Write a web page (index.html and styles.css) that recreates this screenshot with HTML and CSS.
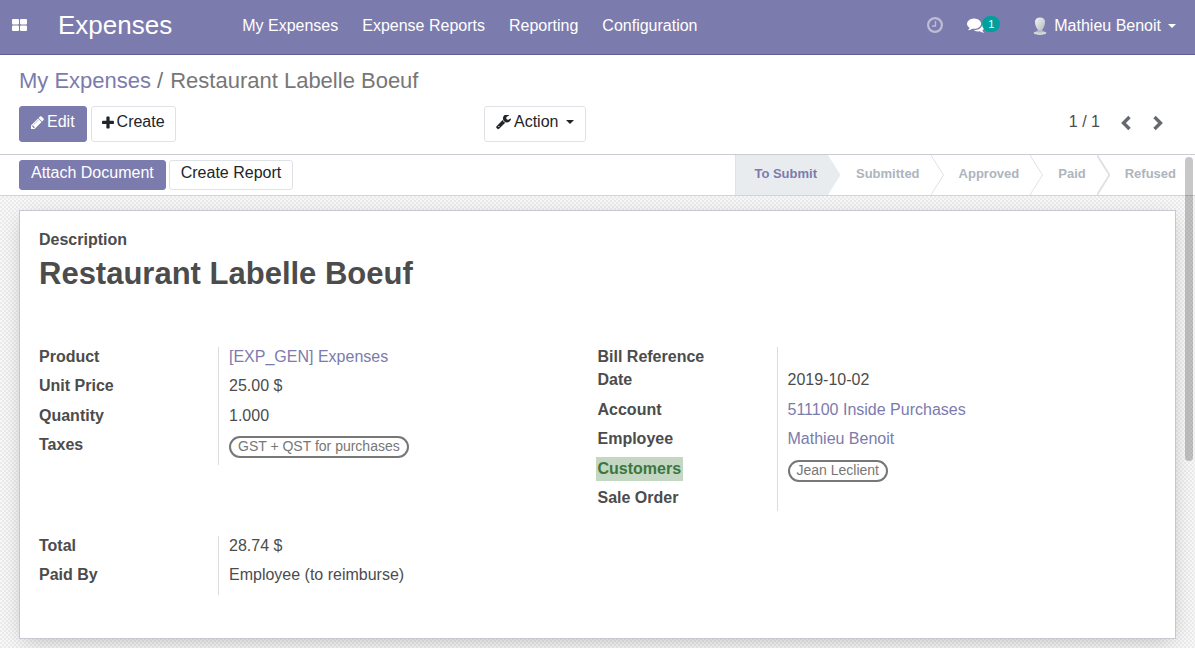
FILE: index.html
```html
<!DOCTYPE html>
<html lang="en">
<head>
<meta charset="utf-8">
<meta name="viewport" content="width=device-width, initial-scale=1">
<title>Restaurant Labelle Boeuf - Expenses</title>
<link rel="stylesheet" href="styles.css">
</head>
<body>
<header class="navbar">
  <button class="apps" aria-label="Applications">
    <svg width="15" height="12" viewBox="0 0 15 12" fill="currentColor"><rect width="7" height="5.5" rx="1"/><rect x="8" width="7" height="5.5" rx="1"/><rect y="6.5" width="7" height="5.5" rx="1"/><rect x="8" y="6.5" width="7" height="5.5" rx="1"/></svg>
  </button>
  <a class="brand" href="#">Expenses</a>
  <nav class="menu">
    <a href="#">My Expenses</a>
    <a href="#">Expense Reports</a>
    <a href="#">Reporting</a>
    <a href="#">Configuration</a>
  </nav>
  <div class="systray">
    <button class="activities" aria-label="Activities">
      <svg width="16" height="16" viewBox="0 0 16 16" fill="none" stroke="currentColor"><circle cx="8" cy="8" r="6.9" stroke-width="2.2"/><path d="M8.5 4v5H5" stroke-width="1.4"/></svg>
    </button>
    <button class="messages" aria-label="Messages">
      <svg width="18" height="18" viewBox="0 0 1792 1792" fill="currentColor"><g transform="translate(0 1536) scale(1 -1)"><path d="M1408 768q0 -139 -94 -257t-256.500 -186.500t-353.500 -68.500q-86 0 -176 16q-124 -88 -278 -128q-36 -9 -86 -16h-3q-11 0 -20.500 8t-11.500 21q-1 3 -1 6.500t0.500 6.500t2 6l2.500 5t3.500 5.500t4 5t4.500 5t4 4.500q5 6 23 25t26 29.500t22.500 29t25 38.500t20.500 44q-124 72 -195 177t-71 224q0 139 94 257t256.500 186.500t353.500 68.500t353.500 -68.500t256.500 -186.500t94 -257zM1792 512q0 -120 -71 -224.500t-195 -176.500q10 -24 20.500 -44t25 -38.500t22.500 -29t26 -29.500t23 -25q1 -1 4 -4.500t4.500 -5t4 -5t3.500 -5.500l2.500 -5t2 -6t0.500 -6.500t-1 -6.500q-3 -14 -13 -22t-22 -7q-50 7 -86 16q-154 40 -278 128q-90 -16 -176 -16q-271 0 -472 132q58 -4 88 -4q161 0 309 45t264 129q125 92 192 212t67 254q0 77 -23 152q129 -71 204 -178t75 -230z"/></g></svg>
      <span class="badge">1</span>
    </button>
    <button class="user">
      <svg width="14" height="18" viewBox="0 0 14 18"><defs><linearGradient id="face" x1="0" y1="0" x2="1" y2="1"><stop offset="0" stop-color="#f4f5f6"/><stop offset="1" stop-color="#b4babe"/></linearGradient></defs><ellipse cx="7" cy="16" rx="6.400" ry="1.900" fill="#d3d7da"/><path d="M4.500 11h5v4.500h-5z" fill="#b4babf"/><path d="M7 0.500c3.400 0 5 1.500 5 4.500S10.300 13.200 7 13.200 2 8 2 5 3.600 .5 7 .5z" fill="url(#face)"/></svg>
      <span>Mathieu Benoit</span>
      <span class="caret"></span>
    </button>
  </div>
</header>

<section class="control-panel">
  <ol class="breadcrumb">
    <li><a href="#">My Expenses</a></li>
    <li>Restaurant Labelle Boeuf</li>
  </ol>
  <div class="toolbar">
    <div class="buttons">
      <button class="btn btn-primary">
        <svg width="13" height="13" viewBox="0 0 1536 1536" fill="currentColor"><g transform="translate(0 1408) scale(1 -1)"><path d="M363 0l91 91l-235 235l-91 -91v-107h128v-128h107zM886 928q0 22 -22 22q-10 0 -17 -7l-542 -542q-7 -7 -7 -17q0 -22 22 -22q10 0 17 7l542 542q7 7 7 17zM832 1120l416 -416l-832 -832h-416v416zM1515 1024q0 -53 -37 -90l-166 -166l-416 416l166 165q36 38 90 38q53 0 91 -38l235 -234q37 -39 37 -91z"/></g></svg>
        Edit
      </button>
      <button class="btn btn-tight">
        <svg width="12" height="13" viewBox="0 0 1408 1536" fill="currentColor"><g transform="translate(0 1472) scale(1 -1)"><path d="M1408 800v-192q0 -40 -28 -68t-68 -28h-416v-416q0 -40 -28 -68t-68 -28h-192q-40 0 -68 28t-28 68v416h-416q-40 0 -68 28t-28 68v192q0 40 28 68t68 28h416v416q0 40 28 68t68 28h192q40 0 68 -28t28 -68v-416h416q40 0 68 -28t28 -68z"/></g></svg>
        Create
      </button>
    </div>
    <div class="actions">
      <button class="btn">
        <svg width="15" height="15" viewBox="0 0 1664 1664" fill="currentColor"><g transform="translate(0 1340) scale(1 -1)"><path d="M384 64q0 26 -19 45t-45 19t-45 -19t-19 -45t19 -45t45 -19t45 19t19 45zM1028 484l-682 -682q-37 -37 -90 -37q-52 0 -91 37l-106 108q-38 36 -38 90q0 53 38 91l681 681q39 -98 114.500 -173.500t173.500 -114.500zM1662 919q0 -39 -23 -106q-47 -134 -164.500 -217.500t-258.500 -83.500q-185 0 -316.500 131.500t-131.500 316.500t131.500 316.500t316.500 131.500q58 0 121.500 -16.500t107.500 -46.500q16 -11 16 -28t-16 -28l-293 -169v-224l193 -107q5 3 79 48.500t135.500 81t70.500 35.500q15 0 23.500 -10t8.500 -25z"/></g></svg>
        Action
        <span class="caret"></span>
      </button>
      <div class="pager">
        <span>1 / 1</span>
        <button aria-label="Previous"><svg width="12" height="16" viewBox="0 0 12 16" fill="none" stroke="currentColor" stroke-width="3.400"><path d="M9.500 2L3.500 8l6 6"/></svg></button>
        <button aria-label="Next"><svg width="12" height="16" viewBox="0 0 12 16" fill="none" stroke="currentColor" stroke-width="3.400"><path d="M2.500 2l6 6-6 6"/></svg></button>
      </div>
    </div>
  </div>
</section>

<main class="content">
  <div class="statusbar">
    <div class="status-buttons">
      <button class="btn btn-small btn-primary">Attach Document</button>
      <button class="btn btn-small">Create Report</button>
    </div>
    <div class="steps">
      <button class="step current" aria-current="step">To Submit</button>
      <svg class="arrow" width="13" height="40" viewBox="0 0 13 40"><path class="arrow-fill" d="M0 0L12.500 20 0 40z"/></svg>
      <button class="step">Submitted</button>
      <svg class="arrow" width="13" height="40" viewBox="0 0 13 40"><path d="M.5 0v1L12.500 20 .5 39v1"/></svg>
      <button class="step">Approved</button>
      <svg class="arrow" width="13" height="40" viewBox="0 0 13 40"><path d="M.5 0v1L12.500 20 .5 39v1"/></svg>
      <button class="step">Paid</button>
      <svg class="arrow arrow-strong" width="13" height="40" viewBox="0 0 13 40"><path d="M.5 0v1L12.500 20 .5 39v1"/></svg>
      <button class="step">Refused</button>
    </div>
  </div>

  <div class="sheet-area">
    <article class="sheet">
      <div class="title-label">Description</div>
      <h1>Restaurant Labelle Boeuf</h1>
      <div class="groups">
        <dl class="group">
          <div class="field"><dt>Product</dt><dd><a href="#">[EXP_GEN] Expenses</a></dd></div>
          <div class="field"><dt>Unit Price</dt><dd>25.00 $</dd></div>
          <div class="field"><dt>Quantity</dt><dd>1.000</dd></div>
          <div class="field"><dt>Taxes</dt><dd><span class="tag">GST + QST for purchases</span></dd></div>
        </dl>
        <dl class="group">
          <div class="field field-empty"><dt>Bill Reference</dt><dd></dd></div>
          <div class="field"><dt>Date</dt><dd>2019-10-02</dd></div>
          <div class="field"><dt>Account</dt><dd><a href="#">511100 Inside Purchases</a></dd></div>
          <div class="field"><dt>Employee</dt><dd><a href="#">Mathieu Benoit</a></dd></div>
          <div class="field"><dt><mark>Customers</mark></dt><dd><span class="tag">Jean Leclient</span></dd></div>
          <div class="field field-empty"><dt>Sale Order</dt><dd></dd></div>
        </dl>
        <dl class="group">
          <div class="field"><dt>Total</dt><dd>28.74 $</dd></div>
          <div class="field"><dt>Paid By</dt><dd>Employee (to reimburse)</dd></div>
        </dl>
      </div>
    </article>
  </div>
  <div class="scroll-thumb"></div>
</main>
</body>
</html>
```
FILE: styles.css
```css
:root {
  --brand: #7c7bad;
  --text: #4c4c4c;
  --line: #dee2e6;
}

* { box-sizing: border-box; }

body {
  margin: 0;
  min-height: 100vh;
  display: flex;
  flex-direction: column;
  background: #fff;
  color: var(--text);
  font: 16px/20px "Liberation Sans", Arial, sans-serif;
}

button {
  margin: 0;
  padding: 0;
  border: 0;
  background: none;
  color: inherit;
  font: inherit;
  cursor: pointer;
}

a { color: var(--brand); text-decoration: none; }
svg { display: block; flex: none; }

.caret {
  border: 4px solid transparent;
  border-top-color: currentColor;
  border-bottom: 0;
}

/* Navigation bar */
.navbar {
  display: flex;
  align-items: center;
  height: 55px;
  padding: 0 19px 4px 12px;
  background: var(--brand);
  border-bottom: 1px solid #5f5e97;
  color: #fff;
}
.navbar a { color: #fff; }
.brand { margin-left: 31px; font-size: 26px; line-height: 30px; }
.menu { display: flex; gap: 24px; margin-left: 70px; padding-top: 2px; }
.systray { display: flex; align-items: center; margin-left: auto; }
.activities { opacity: 0.5; }
.messages { display: flex; align-items: center; margin-left: 24px; }
.badge {
  margin: -2px 0 0 -3px;
  padding: 0 6px;
  border-radius: 8px;
  background: #00a09d;
  font-size: 11px;
  line-height: 16px;
}
.user {
  display: flex;
  align-items: center;
  gap: 7px;
  margin-left: 33px;
  padding-top: 2px;
}

/* Control panel */
.control-panel {
  padding: 12px 19px;
  border-bottom: 1px solid #c9ccd2;
}
.breadcrumb {
  display: flex;
  margin: 0 0 11px;
  padding: 0;
  list-style: none;
  color: #777;
  font-size: 22px;
  line-height: 28px;
}
.breadcrumb li + li::before { content: "/"; padding: 0 7px 0 6px; color: #6c757d; }
.toolbar { display: grid; grid-template-columns: 465fr 692fr; }
.buttons { display: flex; gap: 4px; }
.actions { display: flex; justify-content: space-between; }

.btn {
  display: flex;
  align-items: center;
  gap: 3px;
  height: 36px;
  padding: 0 11px 4px;
  border: 1px solid var(--line);
  border-radius: 3px;
  background: #fff;
  color: #212529;
}
.btn-primary { background: var(--brand); border-color: var(--brand); color: #fff; }
.btn .caret { margin: 0 0 0 5px; }
.btn-tight { padding: 0 10px 4px; }
.btn-small { height: 30px; }

.pager { display: flex; align-items: center; gap: 20px; margin-right: 12px; }
.pager span { padding-bottom: 4px; }
.pager button { padding-bottom: 2px; color: #666a6e; }

/* Status bar */
.content {
  position: relative;
  flex: 1;
  display: flex;
  flex-direction: column;
}
.statusbar {
  display: flex;
  justify-content: space-between;
  padding: 0 19px;
  border-bottom: 1px solid #ced4da;
}
.status-buttons { display: flex; align-items: center; gap: 3px; }
.steps { display: flex; height: 40px; }
.step {
  padding: 0 11px 3px 15px;
  color: #adb5bd;
  font-size: 13px;
  font-weight: bold;
}
.step:last-child { padding-right: 0; }
.step.current {
  padding-left: 18px;
  border-left: 1px solid var(--line);
  background: #e9ecef;
  color: var(--brand);
}
.arrow { fill: none; stroke: var(--line); }
.arrow-strong { stroke-width: 2; }
.arrow-fill { fill: #e9ecef; stroke: none; }

/* Form sheet */
.sheet-area {
  flex: 1;
  padding: 14px 19px 9px;
  background: repeating-conic-gradient(#ebebeb 0% 25%, #f8f8f8 0% 50%) 0 0 / 4px 4px;
}
.sheet {
  padding: 19px 19px 43px;
  border: 1px solid #c8c8d3;
  background: #fff;
  box-shadow: 0 5px 20px -5px rgba(0, 0, 0, 0.25);
}
.title-label { font-weight: bold; }
h1 { margin: 4px 0 54px; font-size: 31px; line-height: 39px; }

.groups {
  display: grid;
  grid-template-columns: 1fr 1fr;
  align-items: start;
  row-gap: 25px;
}
.group { margin: 0; }
.field { display: grid; grid-template-columns: 180px 1fr; height: 29px; }
.field:nth-child(even) { height: 30px; }
.field.field-empty { height: 23px; }
dt { border-right: 1px solid #ddd; font-weight: bold; }
dd { margin: 0; padding-left: 10px; }
mark {
  display: inline-block;
  margin: -2px;
  padding: 2px;
  background: #c3d7c3;
  color: #3c763d;
}
.tag {
  display: inline-block;
  margin-top: 1px;
  padding: 0 7px 2px;
  border: 2px solid #777;
  border-radius: 11px;
  color: #777;
  font-size: 14px;
  line-height: 16px;
}

.scroll-thumb {
  position: absolute;
  top: 2px;
  right: 2px;
  width: 8px;
  height: 304px;
  border-radius: 4px;
  background: rgba(0, 0, 0, 0.22);
}
```
